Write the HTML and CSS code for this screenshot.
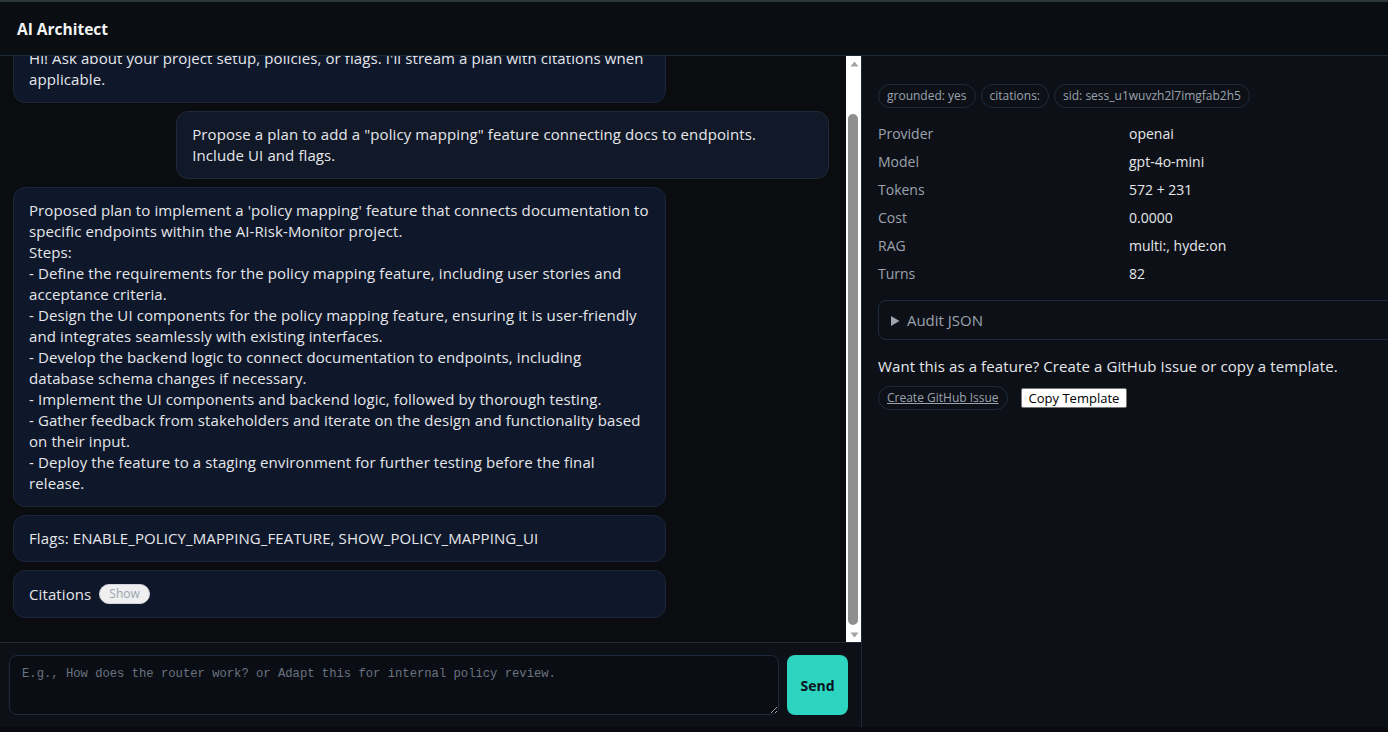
FILE: index.html
```html
<!DOCTYPE html>
<html lang="en">
<head>
<meta charset="utf-8">
<title>AI Architect</title>
<link rel="stylesheet" href="styles.css">
</head>
<body>
<div class="app">
  <header class="topbar">
    <h1 class="title">AI Architect</h1>
  </header>
  <div class="main">
    <section class="left">
      <div class="chat-area">
        <div class="chat">
          <div class="chat-inner">
            <div class="msg assistant">Hi! Ask about your project setup, policies, or flags. I'll stream a plan with citations when<br>applicable.</div>
            <div class="msg user">Propose a plan to add a "policy mapping" feature connecting docs to endpoints.<br>Include UI and flags.</div>
            <div class="msg assistant">Proposed plan to implement a 'policy mapping' feature that connects documentation to<br>specific endpoints within the AI-Risk-Monitor project.<br>Steps:<br>- Define the requirements for the policy mapping feature, including user stories and<br>acceptance criteria.<br>- Design the UI components for the policy mapping feature, ensuring it is user-friendly<br>and integrates seamlessly with existing interfaces.<br>- Develop the backend logic to connect documentation to endpoints, including<br>database schema changes if necessary.<br>- Implement the UI components and backend logic, followed by thorough testing.<br>- Gather feedback from stakeholders and iterate on the design and functionality based<br>on their input.<br>- Deploy the feature to a staging environment for further testing before the final<br>release.</div>
            <div class="msg assistant">Flags: ENABLE_POLICY_MAPPING_FEATURE, SHOW_POLICY_MAPPING_UI</div>
            <div class="msg assistant citations"><span>Citations</span><button class="show-btn" type="button">Show</button></div>
          </div>
        </div>
        <div class="scrollbar" aria-hidden="true">
          <div class="sb-arrow"><svg width="9" height="6" viewBox="0 0 9 6"><polygon points="4.5,0.5 8.5,5.5 0.5,5.5" fill="#a3a3a3"/></svg></div>
          <div class="sb-track"><div class="sb-thumb"></div></div>
          <div class="sb-arrow"><svg width="9" height="6" viewBox="0 0 9 6"><polygon points="0.5,0.5 8.5,0.5 4.5,5.5" fill="#a3a3a3"/></svg></div>
        </div>
      </div>
      <form class="composer">
        <textarea class="input" placeholder="E.g., How does the router work? or Adapt this for internal policy review."></textarea>
        <button class="send" type="button">Send</button>
      </form>
    </section>
    <aside class="panel">
      <div class="chips">
        <span class="chip">grounded: yes</span>
        <span class="chip">citations:</span>
        <span class="chip">sid: sess_u1wuvzh2l7imgfab2h5</span>
      </div>
      <dl class="kv">
        <dt>Provider</dt><dd>openai</dd>
        <dt>Model</dt><dd>gpt-4o-mini</dd>
        <dt>Tokens</dt><dd>572 + 231</dd>
        <dt>Cost</dt><dd>0.0000</dd>
        <dt>RAG</dt><dd>multi:, hyde:on</dd>
        <dt>Turns</dt><dd>82</dd>
      </dl>
      <details class="audit">
        <summary>Audit JSON</summary>
      </details>
      <p class="feature">Want this as a feature? Create a GitHub Issue or copy a template.</p>
      <div class="actions">
        <a class="chip link" href="#">Create GitHub Issue</a>
        <button class="copy" type="button">Copy Template</button>
      </div>
    </aside>
  </div>
</div>
</body>
</html>
```
FILE: styles.css
```css
* { box-sizing: border-box; }
html, body { margin: 0; padding: 0; }
body {
  background: #090b0f;
  color: #e5e7eb;
  font-family: "Segoe UI", "Open Sans", "Noto Sans", sans-serif;
  overflow: hidden;
}
.app {
  height: 727px;
  width: 1420px;
  display: flex;
  flex-direction: column;
}
.topbar {
  height: 56px;
  flex: none;
  border-top: 2px solid #2c3836;
  border-bottom: 1px solid #1e2936;
  background: #0a0d11;
  display: flex;
  align-items: center;
  padding: 0 17px;
}
.title {
  margin: 0;
  font-size: 15.5px;
  font-weight: 700;
  color: #f3f4f6;
}
.main {
  flex: 1;
  min-height: 0;
  display: flex;
}
.left {
  width: 861px;
  flex: none;
  display: flex;
  flex-direction: column;
  background: #0a0c10;
}
.chat-area {
  flex: 1;
  min-height: 0;
  display: flex;
}
.chat {
  flex: 1;
  min-width: 0;
  overflow-y: auto;
  scrollbar-width: none;
  display: flex;
  flex-direction: column-reverse;
}
.scrollbar {
  width: 15px;
  flex: none;
  background: #ffffff;
  display: flex;
  flex-direction: column;
}
.sb-arrow {
  height: 15px;
  flex: none;
  display: flex;
  align-items: center;
  justify-content: center;
  padding-left: 1px;
}
.sb-arrow svg { display: block; }
.sb-track {
  flex: 1;
  display: flex;
  flex-direction: column;
  padding: 43px 3px 2px 2px;
}
.sb-thumb {
  flex: 1;
  border-radius: 5px;
  background: #8f8f8f;
}
.chat-inner {
  display: flex;
  flex-direction: column;
  gap: 8px;
  padding: 12px 17px 24px 13px;
}
.msg {
  width: 80%;
  padding: 12px 15px;
  border: 1px solid #1c2638;
  border-radius: 12px;
  background: #0f172a;
  font-size: 15px;
  letter-spacing: 0.1px;
  line-height: 21px;
  color: #e5e7eb;
  white-space: nowrap;
}
.msg.user {
  align-self: flex-end;
  background: #111827;
  border-color: #1f2937;
}
.msg.citations {
  display: flex;
  align-items: center;
  gap: 8px;
  padding-top: 12px;
  padding-bottom: 12px;
}
.msg.citations span { line-height: 22px; }
.show-btn {
  font-family: inherit;
  font-size: 12px;
  line-height: 16px;
  height: 20px;
  padding: 1px 9px;
  border: 1px solid #d1d5db;
  border-radius: 999px;
  background: #efefef;
  color: #9ca3af;
  letter-spacing: 0;
}
.composer {
  flex: none;
  height: 85px;
  margin: 0;
  border-top: 1px solid #1e2936;
  background: #0d1117;
  padding: 12px 13px 12px 9px;
  display: flex;
  gap: 8px;
}
.input {
  flex: 1;
  height: 60px;
  resize: vertical;
  background: #0a0e14;
  border: 1px solid #1e293b;
  border-radius: 8px;
  padding: 10px 12px;
  color: #e5e7eb;
  font-family: "Liberation Mono", "DejaVu Sans Mono", monospace;
  font-size: 12.2px;
  line-height: 16px;
  outline: none;
}
.input::placeholder { color: #6b7280; }
.send {
  width: 61px;
  height: 60px;
  flex: none;
  border: none;
  border-radius: 8px;
  background: #2dd4bf;
  color: #0b1220;
  font-family: inherit;
  font-weight: 700;
  font-size: 14px;
}
.panel {
  flex: 1;
  border-left: 1px solid #1e2936;
  background: #0d1117;
  padding: 28px 17px 0 16px;
}
.chips {
  display: flex;
  gap: 5px;
  margin-bottom: 12px;
}
.chip {
  display: inline-block;
  height: 24px;
  line-height: 22px;
  padding: 0 8px;
  border: 1px solid #1f2a3b;
  border-radius: 999px;
  color: #9ca3af;
  font-size: 12px;
  white-space: nowrap;
}
.kv {
  margin: 0 0 12px;
  display: grid;
  grid-template-columns: 251px 1fr;
  width: 520px;
  font-size: 14px;
  line-height: 28px;
}
.kv dt { color: #9ca3af; }
.kv dd { margin: 0; color: #e5e7eb; }
.audit {
  width: 540px;
  border: 1px solid #1e293b;
  border-radius: 8px;
  padding: 0 12px;
  color: #9ca3af;
  font-size: 15px;
  line-height: 38px;
}
.audit summary { cursor: pointer; }
.feature {
  margin: 16px 0 9px;
  font-size: 15px;
  letter-spacing: 0.1px;
  line-height: 21px;
  color: #e5e7eb;
}
.actions {
  display: flex;
  align-items: center;
  gap: 13px;
}
.chip.link {
  text-decoration: underline;
  color: #9ca3af;
}
.copy {
  font-family: inherit;
  font-size: 13px;
  line-height: 16px;
  padding: 1px 7px;
  background: #ffffff;
  color: #000000;
  border: 1px solid #767676;
  border-radius: 2px;
}
```
